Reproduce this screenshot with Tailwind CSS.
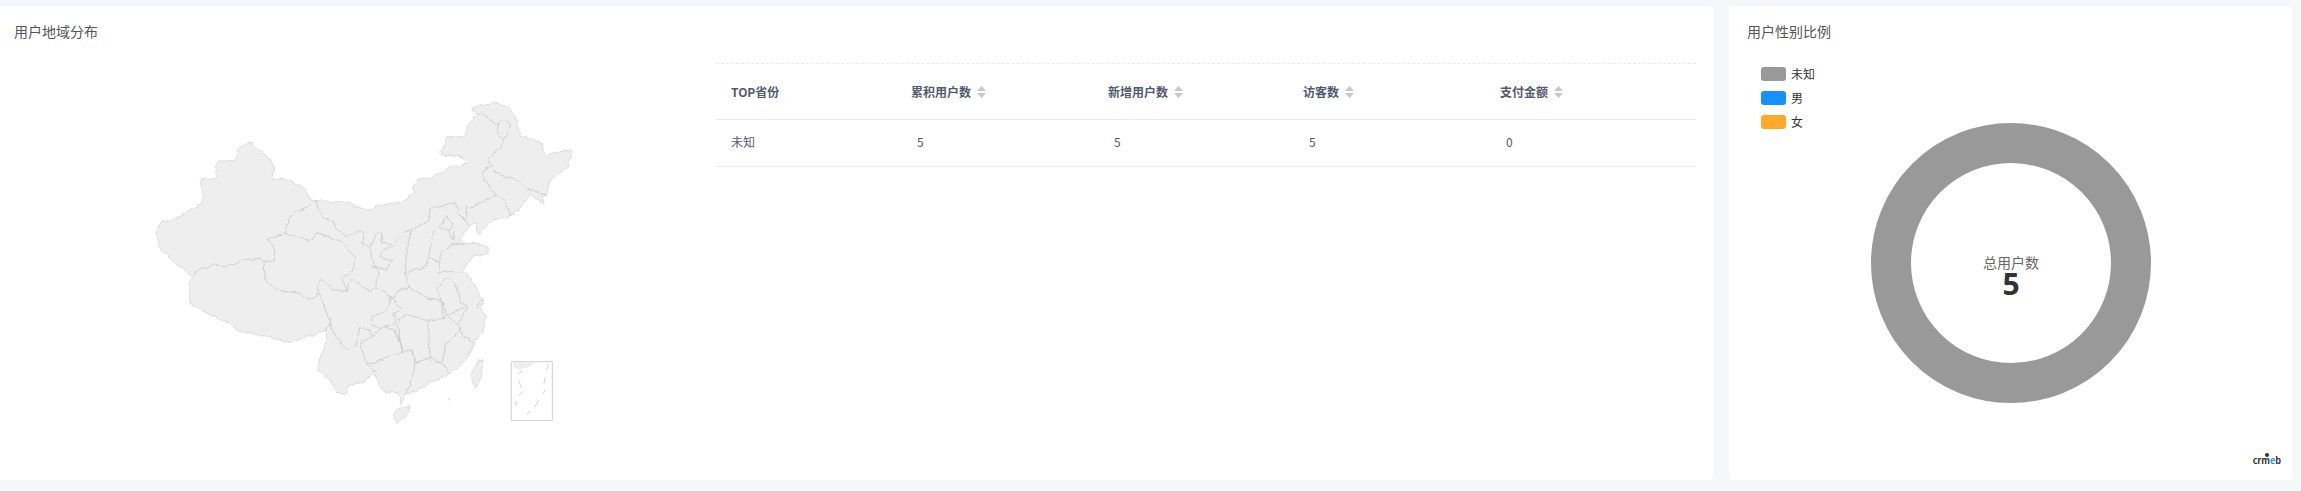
<!DOCTYPE html>
<html lang="en">
<head>
  <meta charset="UTF-8" />
  <title>用户地域分布</title>
  <script src="https://cdn.jsdelivr.net/npm/@tailwindcss/browser@4"></script>
</head>
<body class="bg-[#f5f7f9] font-['Noto_Sans_CJK_SC','Noto_Sans',sans-serif] text-[#515a6e]">
  <div class="flex h-[491px] w-[2301px] gap-[16px] pt-[6px] pb-[11px] pr-[9px]">

    <!-- region panel -->
    <section class="flex w-[1713px] rounded-r bg-white">
      <div class="w-[716px] shrink-0 pt-[15px] pl-[14px]">
        <h2 class="text-[14px] leading-5 text-[#555]">用户地域分布</h2>
        <svg class="mt-[39px] ml-[86px]" width="520" height="360" viewBox="0 0 1560 1080" fill="none" stroke-linejoin="round" stroke-linecap="round">
          <defs>
            <filter id="rough" x="-5%" y="-5%" width="110%" height="110%" color-interpolation-filters="sRGB">
              <feTurbulence type="fractalNoise" baseFrequency="0.045" numOctaves="2" seed="4" result="noise" />
              <feDisplacementMap in="SourceGraphic" in2="noise" scale="14" xChannelSelector="R" yChannelSelector="G" />
            </filter>
          </defs>
          <g filter="url(#rough)">
            <path fill="#eeeeee" stroke="#d6d6d6" stroke-width="2.5" d="M168 455 180 430 225 415 255 400 300 375 310 350 300 300 345 292 352 245 410 240 415 205 440 190 458 190 470 210 500 225 520 255 520 295 560 300 610 320 632 360 650 362 700 365 740 365 800 390 850 372 900 368 945 340 938 320 950 298 1000 290 1040 265 1105 250 1085 230 1025 225 1022 215 1040 170 1090 170 1110 125 1135 100 1115 90 1140 75 1180 68 1225 82 1250 120 1260 165 1325 190 1335 225 1415 208 1405 260 1350 300 1340 345 1325 350 1330 370 1290 345 1260 385 1230 410 1180 420 1135 465 1125 430 1100 445 1080 480 1090 490 1135 490 1165 505 1163 520 1120 530 1085 575 1110 590 1130 630 1150 665 1140 685 1158 705 1145 760 1120 790 1110 820 1080 860 1050 880 1000 905 950 930 915 945 905 970 895 940 850 935 820 880 790 905 745 920 740 945 705 935 690 900 655 870 658 840 680 780 678 750 640 765 580 785 550 790 530 775 480 765 420 755 385 730 330 705 270 670 268 635 275 590 240 560 185 515Z" />
            <g stroke="#c9c9c9" stroke-width="2.5">
              <path d="M275 590 300 565 345 555 380 560 430 540 480 535 492 545 520 540 525 510 505 478 552 460 565 420 590 395 625 380 632 360" />
              <path d="M645 362 665 410 700 425 710 450 740 470 770 455 790 455 785 490 810 505 830 460 845 460 845 490 880 495 915 455 935 450 985 425 990 385 1020 380 1065 365 1075 400 1095 420 1100 380 1110 385 1185 345 1150 290 1150 270 1175 260 1165 235 1200 205 1215 175 1190 165 1195 130 1175 125 1140 95 1135 100" />
              <path d="M1195 130 1220 120 1232 135 1215 175" />
              <path d="M1175 260 1200 285 1240 295 1280 325 1340 345" />
              <path d="M1185 345 1210 355 1230 410" />
              <path d="M1095 420 1110 440" />
              <path d="M552 460 600 475 630 485 650 460 690 470 730 490 765 530 760 570 725 595 740 630" />
              <path d="M492 545 495 600 530 630 600 640 625 660 650 650 655 600 670 600 700 630 740 630 755 595 810 635 830 625 835 570 810 555" />
              <path d="M810 505 820 560 860 570 875 540 840 530 845 515 880 495" />
              <path d="M935 450 920 500 915 580 930 625" />
              <path d="M830 625 880 655 900 625 930 625 985 655 1025 665" />
              <path d="M1000 450 985 535 975 560 915 580" />
              <path d="M985 535 1020 545 1015 580 1045 575 1085 575" />
              <path d="M1020 545 1020 520 1060 490 1090 490" />
              <path d="M1020 440 1040 410 1060 430 1050 450 1025 450Z" />
              <path d="M1045 450 1060 480 1065 455" />
              <path d="M1045 590 1010 625 1030 680 1040 705" />
              <path d="M1045 590 1070 625 1085 670 1100 680 1040 705" />
              <path d="M1100 680 1075 735 1090 770 1120 785" />
              <path d="M1130 685 1145 660" />
              <path d="M655 640 685 700 690 735 678 750" />
              <path d="M690 735 710 770 740 812 765 800 780 745 810 750 815 770 780 790 800 850 830 880" />
              <path d="M875 650 860 690 815 710 815 735 845 745 885 730 880 700 905 690 875 650" />
              <path d="M815 770 850 740 885 750 900 795 910 815 860 835 820 850 800 850" />
              <path d="M880 700 895 715 925 705 985 720 990 830 950 850 935 810 905 815 895 770 895 715" />
              <path d="M935 810 945 850 940 880 925 925 915 945" />
              <path d="M985 720 1030 715 1025 665" />
              <path d="M1030 715 1040 705 1075 735 1085 750 1040 790 1025 850 990 830" />
              <path d="M945 850 980 830 1000 850 1025 850 1050 880" />
            </g>
            <path fill="#eeeeee" stroke="#d6d6d6" stroke-width="2.5" d="M1115 885 1135 840 1150 838 1145 880 1128 925 1118 910Z" />
            <path fill="#eeeeee" stroke="#d6d6d6" stroke-width="2.5" d="M880 1000 900 985 930 980 920 1005 890 1027 880 1020Z" />
          </g>
          <path stroke="#c9c9c9" stroke-width="3" d="M1047 956 1047 960" />
          <!-- south china sea inset -->
          <rect x="1235" y="845" width="122" height="177" stroke="#d0d0d0" stroke-width="3" />
          <path fill="#eeeeee" d="M1237 847 1310 847 1285 862 1255 868 1242 862Z" />
          <path stroke="#d0d0d0" stroke-width="3" d="M1345 855 1340 868M1256 880 1268 872M1258 905 1262 920M1335 895 1332 910M1258 945 1268 936M1335 930 1330 940M1246 965 1250 975M1315 962 1305 980M1280 1002 1290 995" />
        </svg>
      </div>

      <div class="w-[980px] pt-[57px]">
        <div class="grid h-[56px] grid-cols-[180px_197px_195px_197px_1fr] items-center border-t border-dashed border-[#e8eaec] border-b-0 text-[12px] font-semibold">
          <div class="pl-[15px]">TOP省份</div>
          <div class="flex items-center gap-[6px] pl-[15px]">累积用户数
            <svg width="9" height="12" viewBox="0 0 9 12" fill="#c5c8ce"><path d="M4.5 0 9 5H0ZM0 7H9L4.5 12Z" /></svg>
          </div>
          <div class="flex items-center gap-[6px] pl-[15px]">新增用户数
            <svg width="9" height="12" viewBox="0 0 9 12" fill="#c5c8ce"><path d="M4.5 0 9 5H0ZM0 7H9L4.5 12Z" /></svg>
          </div>
          <div class="flex items-center gap-[6px] pl-[15px]">访客数
            <svg width="9" height="12" viewBox="0 0 9 12" fill="#c5c8ce"><path d="M4.5 0 9 5H0ZM0 7H9L4.5 12Z" /></svg>
          </div>
          <div class="flex items-center gap-[6px] pl-[15px]">支付金额
            <svg width="9" height="12" viewBox="0 0 9 12" fill="#c5c8ce"><path d="M4.5 0 9 5H0ZM0 7H9L4.5 12Z" /></svg>
          </div>
        </div>
        <div class="grid h-[48px] grid-cols-[180px_197px_195px_197px_1fr] items-center border-y border-[#e8eaec] pb-[2px] text-[12px]">
          <div class="pl-[15px]">未知</div>
          <div class="pl-[21px]">5</div>
          <div class="pl-[21px]">5</div>
          <div class="pl-[21px]">5</div>
          <div class="pl-[21px]">0</div>
        </div>
      </div>
    </section>

    <!-- gender panel -->
    <section class="relative flex-1 rounded bg-white pt-[15px] pl-[18px]">
      <h2 class="text-[14px] leading-5 text-[#555]">用户性别比例</h2>

      <ul class="absolute top-[61px] left-[32px] flex flex-col gap-[10px] text-[12px] leading-[14px] text-[#333]">
        <li class="flex items-center gap-[5px]"><span class="h-[14px] w-[25px] rounded-[3px] bg-[#999999]"></span>未知</li>
        <li class="flex items-center gap-[5px]"><span class="h-[14px] w-[25px] rounded-[3px] bg-[#1890ff]"></span>男</li>
        <li class="flex items-center gap-[5px]"><span class="h-[14px] w-[25px] rounded-[3px] bg-[#ffa929]"></span>女</li>
      </ul>

      <div class="relative mt-[82px] ml-[124px] flex h-[280px] w-[280px] flex-col items-center justify-center rounded-full border-[40px] border-[#999999]">
        <span class="mt-[24px] text-[14px] leading-[18px] text-[#666]">总用户数</span>
        <span class="font-['Open_Sans',sans-serif] text-[30px] leading-[26px] font-bold text-[#333]">5</span>
      </div>

      <div class="absolute right-[11px] bottom-[15px] flex flex-col items-center text-[9px] leading-[9px] font-bold text-[#333]">
        <span class="mb-[-1px] h-[4px] w-[4px] rounded-full bg-[#333]"></span>
        <span>crm<span class="text-[#1890ff]">e</span>b</span>
      </div>
    </section>
  </div>
</body>
</html>
